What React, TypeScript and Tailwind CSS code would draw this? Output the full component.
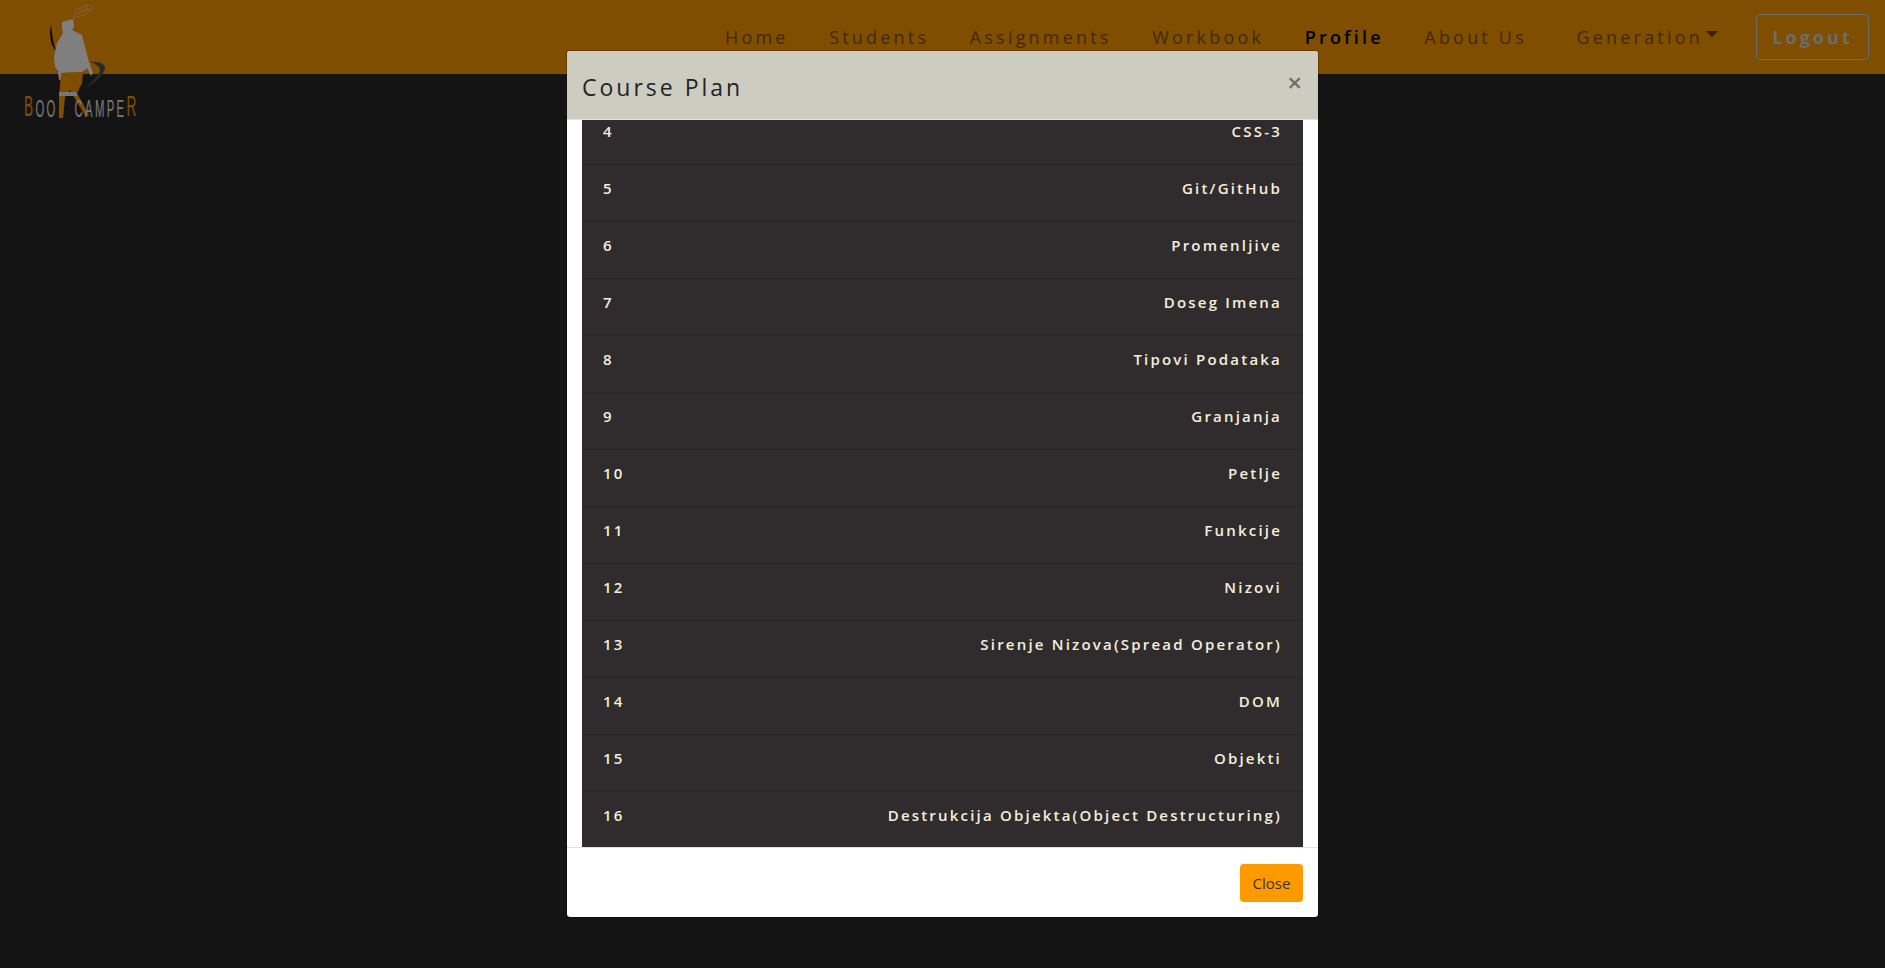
const navLinks = ['Home', 'Students', 'Assignments', 'Workbook', 'Profile', 'About Us'];

const lessons: [number, string][] = [
  [4, 'CSS-3'],
  [5, 'Git/GitHub'],
  [6, 'Promenljive'],
  [7, 'Doseg Imena'],
  [8, 'Tipovi Podataka'],
  [9, 'Granjanja'],
  [10, 'Petlje'],
  [11, 'Funkcije'],
  [12, 'Nizovi'],
  [13, 'Sirenje Nizova(Spread Operator)'],
  [14, 'DOM'],
  [15, 'Objekti'],
  [16, 'Destrukcija Objekta(Object Destructuring)'],
];

function Logo() {
  return (
    <div className="relative h-[120px] w-[150px] shrink-0">
      <svg width="150" height="120" viewBox="0 0 150 120" className="absolute left-0 top-0">
        {/* arc behind the figure */}
        <path d="M51 25 C49 36 51 45 56 51 C53 43 52 35 51 25 Z" fill="#000" />
        <path d="M90 62 C100 61 106 65 105 69 C102 77 94 83 87 87 C93 80 100 74 100 70 C99 66 95 63 90 62 Z" fill="#555" />
        {/* body */}
        <path d="M62 22 L73 19 L74 27 L72 30 L82 35 L85 47 L89 62 L93 73 L91 76 L87 68 L82 72 L60 73 L55 67 L54 57 L57 43 L63 33 L62 28 Z" fill="#fff" />
        <path d="M58 72 L61 72 L61 80 L59 80 Z" fill="#fff" />
        {/* legs */}
        <path d="M61 73 L83 72 L82 83 L77 93 L89 115 L86 117 L74 97 L70 90 L65 97 L63 118 L59 118 L59 97 Z" fill="#ff9c00" />
        <path d="M59 92 L77 92 L77 96 L59 96 Z" fill="#f0f0f0" />
        {/* smoke */}
        <g fill="none" stroke="#f0dcc0" strokeWidth="1" opacity="0.75">
          <path d="M74 19 C76 14 73 11 78 9 C83 7 80 13 85 11 C90 9 84 6 88 5" />
          <path d="M76 17 C80 15 84 17 88 12 C91 9 94 10 92 7 C90 4 84 5 81 8" />
          <path d="M78 13 C82 12 86 9 90 9" />
        </g>
      </svg>
      <div className="absolute left-[24px] top-[92px] flex origin-left scale-x-[0.47] items-end font-['Liberation_Sans',sans-serif] text-[24px] leading-none tracking-[5px] text-[#f0f0f0] whitespace-nowrap">
        <span className="text-[29px] text-[#ff9c00]">B</span>
        <span>OO</span>
        <span className="ml-[36px]">CAMPE</span>
        <span className="text-[29px] text-[#ff9c00]">R</span>
      </div>
    </div>
  );
}

export default function App() {
  return (
    <div className="relative h-[968px] overflow-hidden bg-[#282828] font-['Open_Sans',sans-serif]">
      <nav className="flex h-[74px] items-start justify-between bg-[#ff9c00] pr-4">
        <Logo />
        <div className="flex items-center pt-[14px]">
          <ul className="flex items-center gap-[40.5px] text-[18px] tracking-[3.2px] text-black/50">
            {navLinks.map((link) => (
              <li key={link} className={link === 'Profile' ? 'font-semibold text-black' : ''}>
                {link}
              </li>
            ))}
            <li className="ml-[9px] flex items-center">
              Generation
              <span className="ml-[3px] mt-[-6px] h-0 w-0 border-x-[6px] border-t-[6px] border-x-transparent border-t-black/60" />
            </li>
          </ul>
          <button className="ml-[38px] h-[46px] w-[113px] rounded border border-[#d8d8d8] text-[18px] font-bold tracking-[3px] text-[#d8d8d8]">
            Logout
          </button>
        </div>
      </nav>

      <div className="absolute inset-0 bg-black/50" />

      <div className="absolute left-[566px] top-[50px] flex h-[868px] w-[753px] flex-col overflow-hidden rounded border border-black/20 bg-white bg-clip-padding">
        <div className="flex h-[69px] shrink-0 items-start justify-between border-b border-[#dee2e6] bg-[#cdccc0] pl-[15px] pr-[16px] pt-[17px]">
          <h5 className="text-[23px] leading-[38px] tracking-[3px] text-[#212529]">Course Plan</h5>
          <span className="text-[26px] font-semibold leading-[28px] text-[#6e6e6a]">×</span>
        </div>
        <div className="flex-1 overflow-hidden px-[15px]">
          <div className="-mt-[13px] bg-[#302c2d]">
            {lessons.map(([id, title]) => (
              <div
                key={id}
                className="flex h-[57px] items-start justify-between border-t border-[#2a2627] px-[21px] pt-[12px] text-[15px] font-semibold tracking-[2.2px] text-[#f5efdc]"
              >
                <span>{id}</span>
                <span>{title}</span>
              </div>
            ))}
          </div>
        </div>
        <div className="flex h-[70px] shrink-0 items-start justify-end border-t border-[#dee2e6] pr-[15px] pt-4">
          <button className="h-[38px] w-[63px] rounded bg-[#ff9900] text-[15px] text-[#3d3320]">Close</button>
        </div>
      </div>
    </div>
  );
}
